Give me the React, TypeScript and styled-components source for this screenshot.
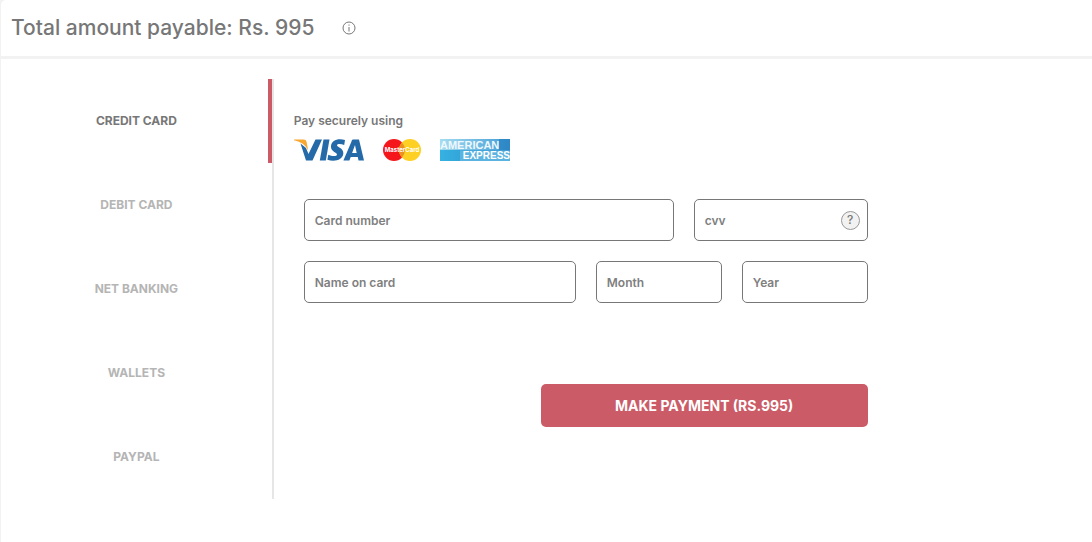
import React from "react";
import styled, { createGlobalStyle } from "styled-components";

const GlobalStyle = createGlobalStyle`
  * { box-sizing: border-box; }
  body { margin: 0; background: #f2f2f2; font-family: Inter, sans-serif; color: #777; }
  button, input, select { font-family: inherit; margin: 0; }
`;

const Panel = styled.main`
  margin-left: 1px;
  min-height: 100vh;
  background: #fff;
  border-top-left-radius: 5px;
`;

const Header = styled.header`
  display: flex;
  align-items: center;
  gap: 28px;
  height: 59px;
  padding: 0 10px;
  border-bottom: 3px solid #f2f2f2;
`;

const Title = styled.h1`
  margin: 0;
  font-size: 21px;
  line-height: 28px;
  font-weight: 550;
`;

const InfoButton = styled.button`
  display: flex;
  padding: 0;
  border: 0;
  background: none;
  color: #777;
`;

const Body = styled.div`
  display: grid;
  grid-template-columns: 1fr 3fr;
  padding: 20px 0;
`;

const Methods = styled.nav`
  display: flex;
  flex-direction: column;
  border-right: 2px solid #e6e6e6;
`;

const Method = styled.button<{ $active: boolean }>`
  height: 84px;
  padding: 0;
  border: 0;
  background: none;
  font-size: 12px;
  line-height: 16px;
  font-weight: 700;
  color: ${(p) => (p.$active ? "#777" : "#b5b5b5")};
  box-shadow: ${(p) => (p.$active ? "inset -4px 0 #cb5b66" : "none")};
`;

const Payment = styled.section`
  padding: 32px 20px 0;
`;

const Intro = styled.p`
  margin: 0 0 8px;
  font-size: 12px;
  line-height: 20px;
  font-weight: 600;
`;

const Logos = styled.div`
  display: flex;
  justify-content: space-between;
  width: 216px;
`;

const Form = styled.form`
  display: flex;
  flex-direction: column;
  gap: 20px;
  max-width: 584px;
  padding: 38px 10px 0;
`;

const Row = styled.div<{ $columns: string }>`
  display: grid;
  grid-template-columns: ${(p) => p.$columns};
  gap: 20px;
`;

const Field = styled.div`
  display: flex;
  align-items: center;
  min-width: 0;
  height: 42px;
  padding: 0 7px 0 10px;
  border: 1px solid #777;
  border-radius: 5px;
`;

const Input = styled.input`
  flex: 1;
  width: 0;
  min-width: 0;
  padding: 0;
  border: 0;
  outline: 0;
  background: none;
  font-size: 12px;
  font-weight: 600;
  color: #777;
  &::placeholder { color: #808080; opacity: 1; }
`;

const Select = styled.select`
  flex: 1;
  min-width: 0;
  padding: 0;
  border: 0;
  outline: 0;
  appearance: none;
  background: none;
  font-size: 12px;
  font-weight: 600;
  color: #808080;
`;

const HelpButton = styled.button`
  width: 19px;
  height: 19px;
  padding: 0;
  border: 1px solid #999;
  border-radius: 50%;
  background: #f2f2f2;
  font-size: 12px;
  line-height: 16px;
  font-weight: 500;
  color: #777;
`;

const PayButton = styled.button`
  align-self: flex-end;
  width: 58%;
  height: 43px;
  margin-top: 61px;
  border: 0;
  border-radius: 5px;
  background: #cb5b66;
  font-size: 14px;
  font-weight: 700;
  color: #fff;
`;

const InfoIcon = () => (
  <svg width="14" height="14" viewBox="0 0 14 14" fill="none" stroke="currentColor">
    <circle cx="7" cy="7" r="6" />
    <path d="M7 6v4.5M7 3.5v1.2" />
  </svg>
);

const Visa = () => (
  <svg width="70" height="22" viewBox="0 0 70 22" role="img" aria-label="Visa">
    <g fill="#2469a8">
      <path d="M21.500 .5H28L18.500 21.500H12L6.500 4.500 12 9l2.500 6Z" />
      <path d="M29.500 .5h6l-3.700 21h-6Z" />
      <path d="M51 1.100 50.200 6c-3-1.400-7-1.700-7.200.3-.1 2 6.700 2.800 6.300 8.200-.4 6.300-8.500 8.800-15.900 6.200l.9-5c3.500 1.800 8.500 2 8.700-.2.200-2-6.500-2.700-6-8.300C37.400 1 44.600-1.200 51 1.100Z" />
      <path fillRule="evenodd" d="M59 .5h6l5 21h-5.500l-.7-3.400h-7.100l-1.300 3.400h-6l8-18.800C57.900 1.400 58 .5 59 .5Zm2 5.500-2.900 8h4.600Z" />
    </g>
    <path d="M0 .5H9.500C11.200 .5 12.200 1.300 12.600 3L14.200 11.500C11.500 6 7 2.800 0 1.300Z" fill="#f7a832" />
  </svg>
);

const MasterCard = () => (
  <svg width="40" height="22" viewBox="0 0 40 22" role="img" aria-label="MasterCard">
    <circle cx="12" cy="11" r="11" fill="#f5161c" />
    <circle cx="28" cy="11" r="11" fill="#fdd023" />
    <path d="M20 3.500a11 11 0 0 1 0 15 11 11 0 0 1 0-15Z" fill="#e9921f" />
    <text x="20" y="13" textAnchor="middle" fontFamily="Inter" fontSize="6" fontWeight="700" fill="#fff">MasterCard</text>
  </svg>
);

const Amex = () => (
  <svg width="70" height="22" viewBox="0 0 70 22" role="img" aria-label="American Express">
    <defs>
      <linearGradient id="amex" x1="0" y1="0" x2="1" y2="0">
        <stop offset="0" stopColor="#35b2e2" />
        <stop offset="1" stopColor="#2f86c4" />
      </linearGradient>
      <linearGradient id="amexTop" x1="0" y1="0" x2="1" y2="0">
        <stop offset="0" stopColor="#a5dcf1" />
        <stop offset="1" stopColor="#4fa5da" />
      </linearGradient>
    </defs>
    <path d="M0 0h70v22H0Z" fill="url(#amex)" />
    <path d="M0 0h59v11H0Z" fill="url(#amexTop)" />
    <text x="0" y="10" fontFamily="Liberation Sans" fontSize="11" fontWeight="700" fill="#eef8fd">AMERICAN</text>
    <path d="M20 11.500h50V22H20Z" fill="#5bb3df" />
    <text x="70" y="20" textAnchor="end" fontFamily="Liberation Sans" fontSize="10" fontWeight="700" fill="#fff">EXPRESS</text>
  </svg>
);

const methods = ["CREDIT CARD", "DEBIT CARD", "NET BANKING", "WALLETS", "PAYPAL"];

export default function App() {
  const [active, setActive] = React.useState(methods[0]);
  return (
    <>
      <GlobalStyle />
      <Panel>
        <Header>
          <Title>Total amount payable: Rs. 995</Title>
          <InfoButton aria-label="Amount details"><InfoIcon /></InfoButton>
        </Header>
        <Body>
          <Methods>
            {methods.map((name) => (
              <Method key={name} $active={name === active} onClick={() => setActive(name)}>{name}</Method>
            ))}
          </Methods>
          <Payment>
            <Intro>Pay securely using</Intro>
            <Logos><Visa /><MasterCard /><Amex /></Logos>
            <Form onSubmit={(e) => e.preventDefault()}>
              <Row $columns="370fr 174fr">
                <Field><Input aria-label="Card number" placeholder="Card number" /></Field>
                <Field>
                  <Input aria-label="cvv" placeholder="cvv" />
                  <HelpButton type="button" aria-label="About cvv">?</HelpButton>
                </Field>
              </Row>
              <Row $columns="272fr 126fr 126fr">
                <Field><Input aria-label="Name on card" placeholder="Name on card" /></Field>
                <Field><Select aria-label="Month"><option>Month</option></Select></Field>
                <Field><Select aria-label="Year"><option>Year</option></Select></Field>
              </Row>
              <PayButton>MAKE PAYMENT (RS.995)</PayButton>
            </Form>
          </Payment>
        </Body>
      </Panel>
    </>
  );
}
